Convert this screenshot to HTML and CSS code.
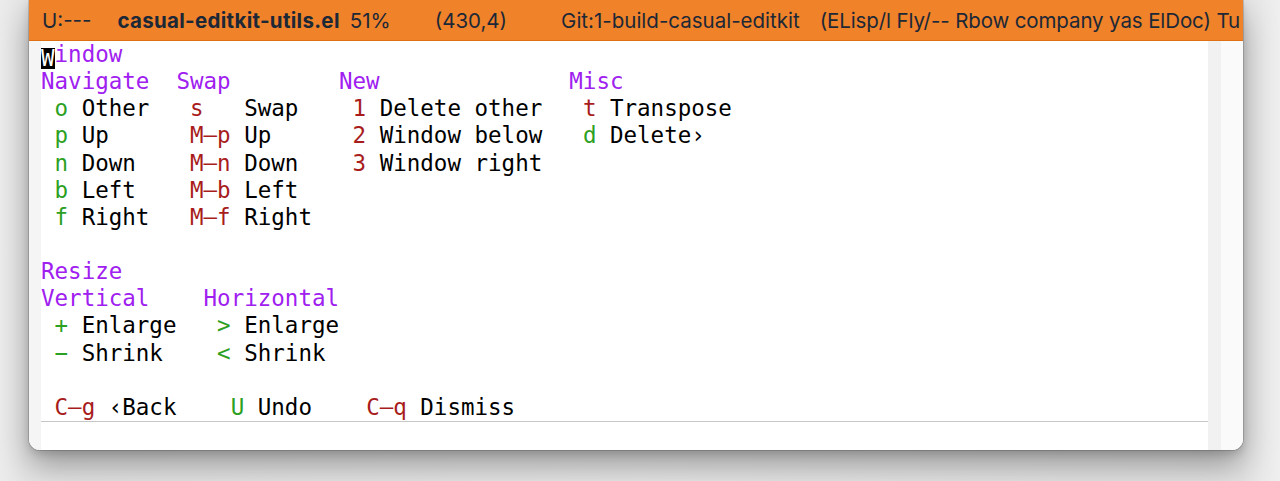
FILE: index.html
```html
<!DOCTYPE html>
<html>
<head>
<meta charset="utf-8">
<link rel="stylesheet" href="styles.css">
</head>
<body>
<div class="desktop">
  <div class="window">
    <div class="modeline">
      <span class="ml-state">U:---</span>
      <span class="ml-file">casual-editkit-utils.el</span>
      <span class="ml-pos">51%</span>
      <span class="ml-lc">(430,4)</span>
      <span class="ml-git">Git:1-build-casual-editkit</span>
      <span class="ml-modes">(ELisp/l Fly/-- Rbow company yas ElDoc) Tu</span>
    </div>
    <div class="buffer">
      <div class="fringe-left"></div>
      <div class="content">
        <div class="text">
          <div class="line"><span class="cursor">W</span><span class="h">indow</span></div>
          <div class="line"><span class="h">Navigate</span>  <span class="h">Swap</span>        <span class="h">New</span>              <span class="h">Misc</span></div>
          <div class="line"> <span class="ks">o</span> Other   <span class="kx">s</span>   Swap    <span class="kx">1</span> Delete other   <span class="kx">t</span> Transpose</div>
          <div class="line"> <span class="ks">p</span> Up      <span class="kx">M–p</span> Up      <span class="kx">2</span> Window below   <span class="ks">d</span> Delete›</div>
          <div class="line"> <span class="ks">n</span> Down    <span class="kx">M–n</span> Down    <span class="kx">3</span> Window right</div>
          <div class="line"> <span class="ks">b</span> Left    <span class="kx">M–b</span> Left</div>
          <div class="line"> <span class="ks">f</span> Right   <span class="kx">M–f</span> Right</div>
          <div class="line"> </div>
          <div class="line"><span class="h">Resize</span></div>
          <div class="line"><span class="h">Vertical</span>    <span class="h">Horizontal</span></div>
          <div class="line"> <span class="ks">+</span> Enlarge   <span class="ks">&gt;</span> Enlarge</div>
          <div class="line"> <span class="ks">−</span> Shrink    <span class="ks">&lt;</span> Shrink</div>
          <div class="line"> </div>
          <div class="line"> <span class="kx">C–g</span> ‹Back    <span class="ks">U</span> Undo    <span class="kx">C–q</span> Dismiss</div>
        </div>
        <div class="echo"></div>
      </div>
      <div class="fringe-right"></div>
      <div class="scrollbar"></div>
    </div>
  </div>
</div>
</body>
</html>
```
FILE: styles.css
```css
html, body {
  margin: 0;
  padding: 0;
}
body {
  width: 1280px;
  height: 481px;
  overflow: hidden;
  background: linear-gradient(90deg, #ececec 0%, #e6e6e6 2%, #e9e9e9 50%, #e4e4e4 97%, #efefef 100%);
}
.desktop {
  height: 481px;
  padding-left: 29px;
  box-sizing: border-box;
}
.window {
  width: 1214px;
  height: 450px;
  background: #fff;
  border-radius: 0 0 11px 11px;
  box-shadow: 0 0 0 1px rgba(0,0,0,0.15), 0 16px 32px rgba(0,0,0,0.34), 0 4px 8px rgba(0,0,0,0.14);
  overflow: hidden;
  display: flex;
  flex-direction: column;
}
.modeline {
  height: 41px;
  flex: none;
  background: #f0822a;
  border-bottom: 1px solid #e06f14;
  box-sizing: border-box;
  display: flex;
  align-items: center;
  white-space: nowrap;
  overflow: hidden;
  padding-left: 13px;
  font-family: Inter, "Noto Sans", sans-serif;
  font-size: 20.5px;
  color: #1c2836;
}
.ml-file { font-weight: 700; margin-left: 26px; letter-spacing: 0.3px; }
.ml-pos { margin-left: 10px; }
.ml-lc { margin-left: 44px; }
.ml-git { margin-left: 54px; }
.ml-modes { margin-left: 20px; letter-spacing: -0.12px; }
.buffer {
  flex: 1;
  display: flex;
}
.fringe-left {
  width: 12px;
  background: #f5f5f5;
  flex: none;
}
.content {
  flex: 1;
  display: flex;
  flex-direction: column;
}
.text {
  font-family: "DejaVu Sans Mono", monospace;
  font-size: 22.5px;
  color: #000;
}
.line {
  white-space: pre;
  height: 27.15px;
  line-height: 27.15px;
}
.h { color: #a020f0; }
.ks { color: #2ca022; }
.kx { color: #a81c1c; }
.cursor {
  display: inline-block;
  background: #000;
  color: #fff;
  height: 21px;
  line-height: 21px;
  vertical-align: -4px;
}
.echo {
  flex: 1;
  border-top: 1px solid #c6c6c6;
}
.fringe-right {
  width: 13px;
  flex: none;
  background: #f1f1f1;
}
.scrollbar {
  width: 22px;
  flex: none;
  background: #fafafa;
}
```
